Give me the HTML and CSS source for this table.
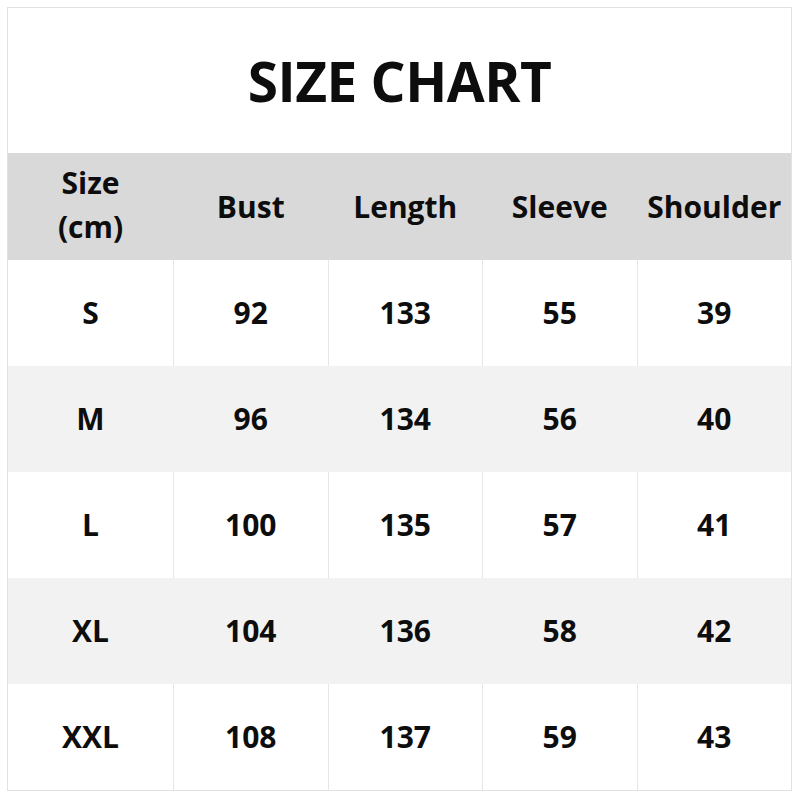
FILE: index.html
```html
<!DOCTYPE html>
<html>
<head>
<meta charset="utf-8">
<link rel="stylesheet" href="styles.css">
</head>
<body>
<div class="chart">
  <div class="title">SIZE CHART</div>
  <div class="row head">
    <div class="cell size-head">Size<br>(cm)</div>
    <div class="cell">Bust</div>
    <div class="cell">Length</div>
    <div class="cell">Sleeve</div>
    <div class="cell">Shoulder</div>
  </div>
  <div class="row">
    <div class="cell">S</div><div class="cell">92</div><div class="cell">133</div><div class="cell">55</div><div class="cell">39</div>
  </div>
  <div class="row alt">
    <div class="cell">M</div><div class="cell">96</div><div class="cell">134</div><div class="cell">56</div><div class="cell">40</div>
  </div>
  <div class="row">
    <div class="cell">L</div><div class="cell">100</div><div class="cell">135</div><div class="cell">57</div><div class="cell">41</div>
  </div>
  <div class="row alt">
    <div class="cell">XL</div><div class="cell">104</div><div class="cell">136</div><div class="cell">58</div><div class="cell">42</div>
  </div>
  <div class="row">
    <div class="cell">XXL</div><div class="cell">108</div><div class="cell">137</div><div class="cell">59</div><div class="cell">43</div>
  </div>
</div>
</body>
</html>
```
FILE: styles.css
```css
html, body {
  margin: 0;
  padding: 0;
  background: #ffffff;
}
body {
  font-family: "Open Sans", "Noto Sans", sans-serif;
  font-weight: 700;
  color: #0d0d0d;
}
.chart {
  box-sizing: border-box;
  width: 785px;
  margin: 7px 0 0 7px;
  border: 1px solid #e2e2e2;
}
.title {
  height: 145px;
  display: flex;
  align-items: center;
  justify-content: center;
  font-size: 55px;
  letter-spacing: -0.5px;
  background: #ffffff;
}
.row {
  display: grid;
  grid-template-columns: 165px repeat(4, 1fr);
  height: 106px;
  background: #ffffff;
}
.row.head {
  height: 107px;
  background: #d9d9d9;
}
.row.alt {
  background: #f2f2f2;
}
.cell {
  display: flex;
  align-items: center;
  justify-content: center;
  text-align: center;
  font-size: 30px;
  line-height: 36px;
  border-left: 1px solid #e6e6e6;
}
.cell.size-head {
  line-height: 44px;
  padding-bottom: 3px;
}
.cell:first-child {
  border-left: none;
}
.row.head .cell,
.row.alt .cell {
  border-left-color: transparent;
}
```
